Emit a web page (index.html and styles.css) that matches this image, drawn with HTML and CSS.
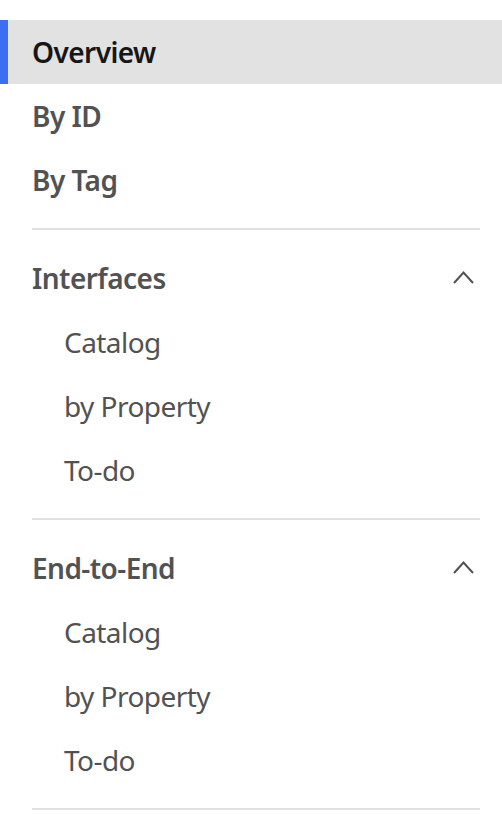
FILE: index.html
```html
<!DOCTYPE html>
<html lang="en">
<head>
<meta charset="utf-8">
<title>Side nav</title>
<link rel="stylesheet" href="styles.css">
</head>
<body>
<nav class="sidenav">
  <ul class="menu">
    <li><a class="link link--active" href="#">Overview</a></li>
    <li><a class="link" href="#">By ID</a></li>
    <li><a class="link" href="#">By Tag</a></li>
  </ul>
  <hr class="divider">
  <div class="group">
    <button class="group-head" type="button">
      <span>Interfaces</span>
      <svg class="chevron" width="32" height="32" viewBox="0 0 32 32" aria-hidden="true"><path d="M6 21 L15.5 10.5 L25 21" fill="none" stroke="#525252" stroke-width="2"/></svg>
    </button>
    <ul class="menu">
      <li><a class="sublink" href="#">Catalog</a></li>
      <li><a class="sublink" href="#">by Property</a></li>
      <li><a class="sublink" href="#">To-do</a></li>
    </ul>
  </div>
  <hr class="divider">
  <div class="group">
    <button class="group-head" type="button">
      <span>End-to-End</span>
      <svg class="chevron" width="32" height="32" viewBox="0 0 32 32" aria-hidden="true"><path d="M6 21 L15.5 10.5 L25 21" fill="none" stroke="#525252" stroke-width="2"/></svg>
    </button>
    <ul class="menu">
      <li><a class="sublink" href="#">Catalog</a></li>
      <li><a class="sublink" href="#">by Property</a></li>
      <li><a class="sublink" href="#">To-do</a></li>
    </ul>
  </div>
  <hr class="divider">
</nav>
</body>
</html>
```
FILE: styles.css
```css
html, body {
  margin: 0;
  padding: 0;
  background: #ffffff;
  overflow: hidden;
}

.sidenav {
  width: 512px;
  padding-top: 20px;
  font-family: "Noto Sans", "Open Sans", sans-serif;
  font-size: 28px;
  letter-spacing: -0.55px;
}

.menu {
  list-style: none;
  margin: 0;
  padding: 0;
}

.link,
.sublink,
.group-head {
  display: flex;
  align-items: center;
  height: 64px;
  box-sizing: border-box;
  text-decoration: none;
  color: #525252;
}

.link {
  padding: 0 32px;
  font-weight: 600;
  border-left: 8px solid transparent;
  padding-left: 24px;
}

.link--active {
  background: #e2e2e2;
  color: #161616;
  border-left-color: #3d6df2;
}

.sublink {
  padding: 0 32px 0 64px;
  font-weight: 400;
}

.group-head {
  width: 100%;
  border: 0;
  background: none;
  font: inherit;
  font-weight: 600;
  letter-spacing: inherit;
  justify-content: space-between;
  padding: 0 32px;
  cursor: pointer;
}

.chevron {
  display: block;
}

.divider {
  border: 0;
  height: 2px;
  background: #e0e0e0;
  margin: 16px 32px;
}
```
